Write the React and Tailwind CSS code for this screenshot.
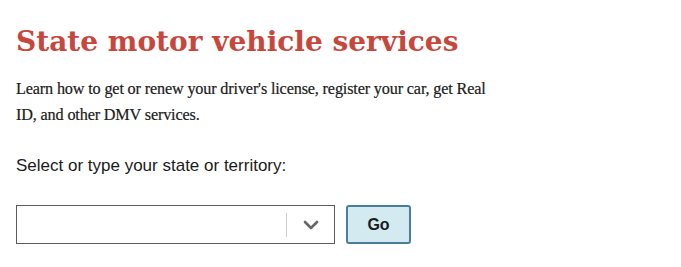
export default function App() {
  return (
    <div className="bg-white w-[681px] h-[267px] px-[16px] pt-[22px]">
      <h1 className="text-[#c7473c] font-bold text-[28px] leading-[40px] m-0" style={{ fontFamily: '"DejaVu Serif", serif' }}>
        State motor vehicle services
      </h1>
      <p className="mt-[14px] text-[#1b1b1b] text-[16.2px] leading-[26px] w-[480px] tracking-[-0.15px] [-webkit-text-stroke:0.2px_#1b1b1b]" style={{ fontFamily: '"Liberation Serif", serif' }}>
        Learn how to get or renew your driver's license, register your car, get Real ID, and other DMV services.
      </p>
      <label className="block mt-[28px] text-[#1b1b1b] text-[17px] leading-[20px]" style={{ fontFamily: '"Liberation Sans", sans-serif' }}>
        Select or type your state or territory:
      </label>
      <div className="flex items-center gap-[11px] mt-[29px]">
        <div className="w-[319px] h-[39px] border border-[#5c5c5c] flex items-center justify-end">
          <div className="w-px h-[24px] bg-[#cccccc]" />
          <div className="w-[47px] flex justify-center">
            <svg width="16" height="10" viewBox="0 0 16 10" fill="none">
              <path d="M2 2 L8 8 L14 2" stroke="#666666" strokeWidth="2.6" strokeLinecap="round" strokeLinejoin="round" />
            </svg>
          </div>
        </div>
        <button className="w-[65px] h-[39px] bg-[#d3eaf0] border-2 border-[#4a7f99] rounded-[3px] text-[#1b1b1b] font-bold text-[16px]" style={{ fontFamily: '"Liberation Sans", sans-serif' }}>
          Go
        </button>
      </div>
    </div>
  );
}
